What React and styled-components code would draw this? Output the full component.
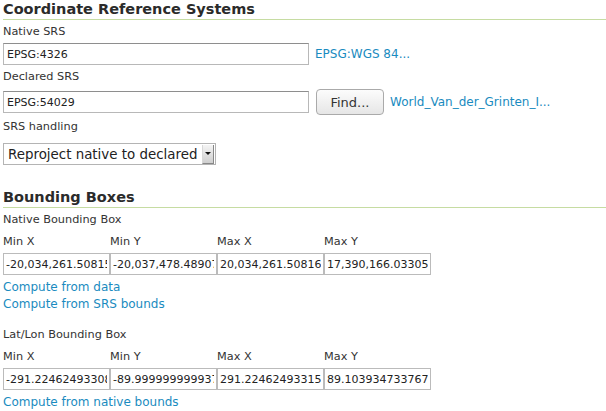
import React from "react";
import styled, { createGlobalStyle } from "styled-components";

const Global = createGlobalStyle`
  body {
    margin: 0;
    background: #fff;
    font-family: "DejaVu Sans", Verdana, sans-serif;
    font-size: 11.3px;
    color: #333;
  }
`;

const Page = styled.div`
  padding: 0 0 0 3px;
  width: 603px;
`;

const Heading = styled.h2`
  margin: ${(p) => (p.$first ? "1px" : "24px")} 0 0 0;
  font-size: 14.5px;
  font-weight: bold;
  color: #2b2b2b;
  line-height: 17px;
  padding-bottom: 1px;
  border-bottom: 1px solid #c6dca2;
`;

const Label = styled.div`
  margin-top: ${(p) => p.$top || 5}px;
  line-height: 14px;
  font-size: 11.3px;
  color: #333;
`;

const Row = styled.div`
  display: flex;
  align-items: center;
  margin-top: ${(p) => p.$top || 4}px;
`;

const TextInput = styled.input`
  box-sizing: border-box;
  width: ${(p) => p.$w || 306}px;
  height: 22px;
  padding: 0 3px;
  border: 1px solid #b8b8b8;
  border-top-color: #8e8e8e;
  font-family: "DejaVu Sans", Verdana, sans-serif;
  font-size: 11px;
  color: #222;
  background: #fff;
  outline: none;
`;

const Link = styled.a`
  color: #1a8bc0;
  text-decoration: none;
  font-size: 12px;
  margin-left: ${(p) => p.$ml || 0}px;
  display: ${(p) => (p.$block ? "block" : "inline")};
  line-height: 17px;
`;

const Button = styled.button`
  box-sizing: border-box;
  width: 68px;
  height: 26px;
  margin-left: 7px;
  padding: 0;
  border: 1px solid #aaa;
  border-radius: 4px;
  background: linear-gradient(#fcfcfc, #e6e6e6);
  font-family: "DejaVu Sans", Verdana, sans-serif;
  font-size: 13px;
  color: #333;
`;

const SelectBox = styled.div`
  display: inline-flex;
  align-items: center;
  justify-content: space-between;
  box-sizing: border-box;
  width: 213px;
  height: 22px;
  border: 1px solid #b4b4b4;
  background: #fff;
  font-size: 13.4px;
  color: #222;
  padding-left: 4px;
  white-space: nowrap;
`;

const Arrow = styled.span`
  display: flex;
  flex: none;
  align-items: center;
  justify-content: center;
  width: 10px;
  height: 18px;
  margin: 0 1px 0 4px;
  background: linear-gradient(#f4f4f4, #cfcfcf);
  border-left: 1px solid #d8d8d8;
  border-right: 1px solid #888;
  border-bottom: 1px solid #888;
  &::after {
    content: "";
    border-left: 3px solid transparent;
    border-right: 3px solid transparent;
    border-top: 3px solid #111;
  }
`;

const Grid = styled.div`
  display: grid;
  grid-template-columns: repeat(4, 107px);
  width: 428px;
  margin-top: 8px;
`;

const ColLabel = styled.div`
  line-height: 14px;
  padding-bottom: 4px;
`;

const Cell = styled.input`
  box-sizing: border-box;
  width: 107px;
  height: 22px;
  padding: 0 2px;
  border: 1px solid #bbb;
  font-family: "DejaVu Sans", Verdana, sans-serif;
  font-size: 11px;
  color: #222;
  outline: none;
`;

const Links = styled.div`
  margin-top: 4px;
`;

function BBox({ values }) {
  const labels = ["Min X", "Min Y", "Max X", "Max Y"];
  return (
    <Grid>
      {labels.map((l) => (
        <ColLabel key={l}>{l}</ColLabel>
      ))}
      {values.map((v, i) => (
        <Cell key={i} defaultValue={v} readOnly />
      ))}
    </Grid>
  );
}

export default function App() {
  return (
    <Page>
      <Global />
      <Heading $first>Coordinate Reference Systems</Heading>
      <Label $top={5}>Native SRS</Label>
      <Row $top={4}>
        <TextInput defaultValue="EPSG:4326" readOnly />
        <Link href="#" $ml={6}>EPSG:WGS 84...</Link>
      </Row>
      <Label $top={5}>Declared SRS</Label>
      <Row $top={5}>
        <TextInput defaultValue="EPSG:54029" readOnly />
        <Button>Find...</Button>
        <Link href="#" $ml={6}>World_Van_der_Grinten_I...</Link>
      </Row>
      <Label $top={5}>SRS handling</Label>
      <Row $top={9}>
        <SelectBox>
          <span>Reproject native to declared</span>
          <Arrow />
        </SelectBox>
      </Row>

      <Heading>Bounding Boxes</Heading>
      <Label $top={5}>Native Bounding Box</Label>
      <BBox
        values={[
          "-20,034,261.50815",
          "-20,037,478.48907",
          "20,034,261.50816",
          "17,390,166.03305",
        ]}
      />
      <Links>
        <Link href="#" $block>Compute from data</Link>
        <Link href="#" $block>Compute from SRS bounds</Link>
      </Links>
      <Label $top={15}>Lat/Lon Bounding Box</Label>
      <BBox
        values={[
          "-291.22462493308",
          "-89.999999999937",
          "291.22462493315",
          "89.103934733767",
        ]}
      />
      <Links>
        <Link href="#" $block>Compute from native bounds</Link>
      </Links>
    </Page>
  );
}
